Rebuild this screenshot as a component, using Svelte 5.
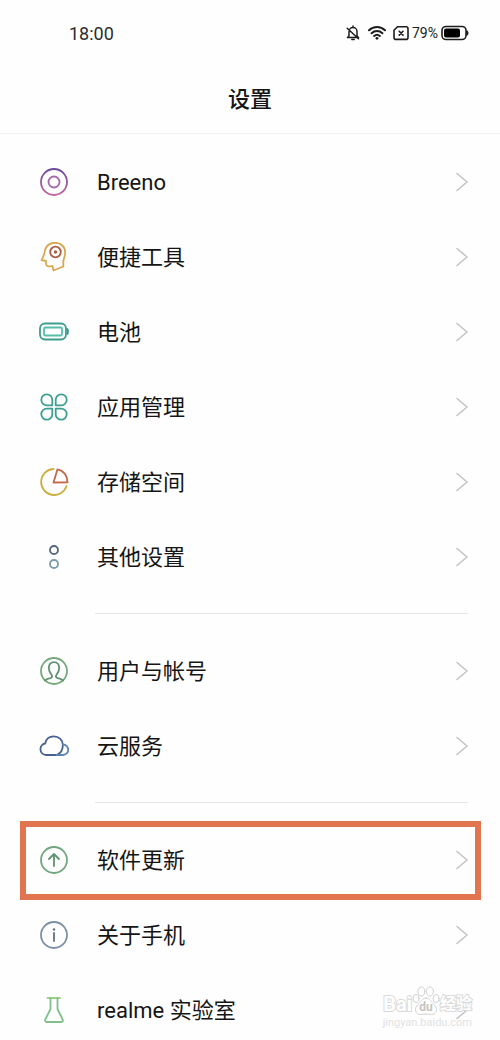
<script>
	const groups = [
		[
			{ id: "breeno", name: "Breeno" },
			{ id: "tools", name: "便捷工具" },
			{ id: "battery", name: "电池" },
			{ id: "apps", name: "应用管理" },
			{ id: "storage", name: "存储空间" },
			{ id: "other", name: "其他设置" },
		],
		[
			{ id: "account", name: "用户与帐号" },
			{ id: "cloud", name: "云服务" },
		],
		[
			{ id: "update", name: "软件更新" },
			{ id: "about", name: "关于手机" },
			{ id: "lab", name: "realme 实验室" },
		],
	];

	let marked = "update";
</script>

<main>
	<div class="status">
		<span class="time">18:00</span>
		<div class="indicators">
			<svg class="bell" width="14" height="16" viewBox="0 0 14 16">
				<path d="M3 11V6.5a4 4 0 0 1 8 0V11l1.5 1.5h-11L3 11M7 1v1.5M5.8 14.4h2.4M1.2 3.2l11.3 10.6" />
			</svg>
			<svg class="wifi" width="18" height="16" viewBox="0 0 18 16">
				<path d="M1 5.2a11.5 11.5 0 0 1 16 0M3.6 8.2a7.8 7.8 0 0 1 10.8 0M6.2 11a4.2 4.2 0 0 1 5.6 0" />
				<circle cx="9" cy="13.3" r="1.4" />
			</svg>
			<svg class="sim" width="16" height="16" viewBox="0 0 16 16">
				<path d="M4.5 1.8H13a2 2 0 0 1 2 2v8.6a2 2 0 0 1-2 2H3a2 2 0 0 1-2-2V5.3zM6.2 6.3l3.8 3.8M10 6.3l-3.8 3.8" />
			</svg>
			<span class="percent">79%</span>
			<svg class="power" width="28" height="16" viewBox="0 0 28 16">
				<rect x="1" y="1.5" width="24" height="13" rx="4" />
				<rect class="level" x="3" y="3.5" width="16" height="9" rx="2" />
				<path d="M26 6.2q1.4 1.8 0 3.6z" />
			</svg>
		</div>
	</div>

	<header>
		<h1>设置</h1>
	</header>

	<nav>
		{#each groups as group}
			<ul>
				{#each group as item}
					<li class:marked={item.id === marked}>
						<a href="#{item.id}">
							<svg class="icon" width="30" height="30" viewBox="0 0 30 30">
								{#if item.id === "breeno"}
									<defs>
										<linearGradient id="ring" x1="0" y1="0" x2="0" y2="1">
											<stop offset="0" stop-color="#6a4a9c" />
											<stop offset="1" stop-color="#c0669c" />
										</linearGradient>
									</defs>
									<circle cx="15" cy="15" r="13" stroke="url(#ring)" />
									<circle cx="15" cy="15" r="5.5" stroke="#a668ac" />
								{:else if item.id === "tools"}
									<path
										stroke="#d8a850"
										d="M6 8C7.500 3.500 11 .8 16 .8c6 0 10.200 4 10.200 9.700 0 4-1.700 6-1.900 9.500v4.500L14.500 28.500l-1-4.500c-3 .9-6.300.5-6.500-1.800V19L2.500 18c2-3 3-6 3.500-10z"
									/>
									<circle cx="16.500" cy="10" r="5.300" stroke="#a95f45" />
									<circle cx="16.500" cy="10" r="1.700" fill="#a95f45" stroke="none" />
								{:else if item.id === "battery"}
									<rect x="1" y="6.500" width="26" height="16" rx="5" stroke="#3c9d8c" />
									<rect x="5" y="10.500" width="18" height="8" rx="1.500" stroke="#55bda9" />
									<path d="M28.500 12q1 2.500 0 5z" stroke="#3c9d8c" />
								{:else if item.id === "apps"}
									<path
										stroke="#3d9f91"
										d="M13.300 13.300H8a5.500 5.500 0 1 1 5.300-5.500zM16.700 13.300V7.800a5.500 5.500 0 1 1 5.300 5.500zM13.300 16.700v5.500A5.500 5.500 0 1 1 8 16.700zM16.700 16.700H22a5.500 5.500 0 1 1-5.300 5.500z"
									/>
								{:else if item.id === "storage"}
									<path stroke="#cbb044" d="M14.500 2A13 13 0 1 0 27.500 19" />
									<path stroke="#c2694c" d="M18.500 2.300 14.500 15.500l14-.2C28.500 9 25 3.500 18.500 2.300z" />
								{:else if item.id === "other"}
									<circle cx="15" cy="8" r="4" stroke="#53667f" />
									<circle cx="15" cy="22" r="4" stroke="#7b9aaa" />
								{:else if item.id === "account"}
									<circle cx="15" cy="15" r="13" stroke="#76a97b" />
									<path
										stroke="#5f9270"
										d="M6 24.500c1.500-1.500 3.500-2 5.300-2.300 2-.4 2.300-2 1.200-3.500C10.800 16.500 9.800 14.300 9.800 11.700c0-3.400 2.200-5.600 5.200-5.600s5.200 2.200 5.200 5.600c0 2.600-1 4.800-2.700 7-1.100 1.500-.8 3.100 1.200 3.500 1.800.3 3.800.8 5.300 2.300"
									/>
								{:else if item.id === "cloud"}
									<path
										stroke="#45618f"
										d="M7 24a5.800 5.800 0 0 1-.8-11.500C7 8 10.500 5.300 14.800 5.300c5 0 8.700 3.500 9 8.400.2 4.600-1.600 8.300-6.300 10.300z"
									/>
									<path stroke="#5d82b5" d="M17.500 24H24a5 5 0 0 0 0-10.500" />
								{:else if item.id === "update"}
									<circle cx="15" cy="15" r="13" stroke="#71a67e" />
									<path stroke="#5e9270" d="M15 21V9M10 14l5-5 5 5" />
								{:else if item.id === "about"}
									<circle cx="15" cy="15" r="13" stroke="#7d8fa5" />
									<path stroke="#5d7088" d="M15 12.800V21" />
									<circle cx="15" cy="9.500" r="1.200" fill="#5d7088" stroke="none" />
								{:else if item.id === "lab"}
									<path stroke="#9bd383" d="M8.500 3h12.500" />
									<path
										stroke="#7fc08c"
										d="M11.500 3v11L6.300 24.500c-.7 1.600.1 2.500 1.500 2.500h14.400c1.400 0 2.200-.9 1.500-2.500L18.500 14V3"
									/>
								{/if}
							</svg>
							<span class="name">{item.name}</span>
							<svg class="arrow" width="12" height="20" viewBox="0 0 12 20">
								<path d="M1 1.500 11 10 1 18.500" />
							</svg>
						</a>
					</li>
				{/each}
			</ul>
		{/each}
	</nav>

	<div class="watermark">
		<div class="brand">
			<span>Bai</span>
			<span class="paw">
				<svg width="28" height="30" viewBox="0 0 28 30">
					<ellipse cx="4" cy="12.500" rx="3" ry="4" />
					<ellipse cx="9.500" cy="5.500" rx="3.500" ry="4.500" />
					<ellipse cx="18" cy="5.500" rx="3.500" ry="4.500" />
					<ellipse cx="24" cy="12.500" rx="3" ry="4" />
					<path d="M14 12c-4 0-5 4-8 6.500-4.500 4-2.500 10 2.500 10 2 0 3.500-.5 5.500-.5s3.500.5 5.500.5c5 0 7-6 2.500-10C19 16 18 12 14 12z" />
				</svg>
				<small>du</small>
			</span>
			<span class="cn">经验</span>
		</div>
		<div class="site">jingyan.baidu.com</div>
	</div>
</main>

<style>
	:global(body) {
		background-color: #fefefe;
	}

	main {
		position: relative;
		height: 100vh;
		display: flex;
		flex-direction: column;
		overflow: hidden;
		color: #151515;
		font-family: Roboto, "Noto Sans CJK SC", sans-serif;
	}

	svg {
		display: block;
		flex: none;
		fill: none;
		stroke-linecap: round;
		stroke-linejoin: round;
	}

	.status {
		flex: none;
		display: flex;
		align-items: center;
		justify-content: space-between;
		height: 66px;
		padding: 0 31px 0 69px;
	}
	.time {
		font-size: 18px;
		color: #2d2d2d;
	}
	.indicators {
		display: flex;
		align-items: center;
		stroke: #1c1c1c;
	}
	.bell {
		margin-right: 8px;
		stroke-width: 1.5;
	}
	.wifi {
		margin-right: 7px;
		stroke-width: 2;
	}
	.wifi circle {
		fill: #1c1c1c;
		stroke: none;
	}
	.sim {
		margin-right: 3px;
		stroke-width: 1.6;
	}
	.percent {
		font-size: 14px;
		margin-right: 3px;
		color: #222;
	}
	.power {
		stroke-width: 1.6;
	}
	.power .level {
		fill: #000;
		stroke: none;
	}

	header {
		flex: none;
		padding: 19px 0 18px;
		border-bottom: 1px solid #f3f3f3;
		text-align: center;
	}
	h1 {
		margin: 0;
		font-size: 22px;
		font-weight: 500;
		line-height: 30px;
	}

	nav {
		flex: 1;
		padding-top: 10px;
		overflow-y: auto;
		scrollbar-width: none;
	}
	ul {
		list-style: none;
		margin: 0;
		padding: 0;
	}
	ul + ul::before {
		content: "";
		display: block;
		height: 1px;
		margin: 19px 32px 19px 95px;
		background-color: #e6e6e6;
	}
	li {
		position: relative;
	}
	.marked::after {
		content: "";
		position: absolute;
		inset: -1px 19px -3px 20px;
		border: 6px solid #e07550;
		pointer-events: none;
	}
	a {
		display: flex;
		align-items: center;
		height: 75px;
		padding: 0 32px 0 39px;
		color: inherit;
		text-decoration: none;
	}
	.icon {
		stroke-width: 1.8;
	}
	.name {
		flex: 1;
		margin-left: 28px;
		padding-top: 3px;
		font-size: 22px;
		line-height: 30px;
	}
	.arrow {
		stroke: #c4c4c4;
		stroke-width: 1.6;
	}

	.watermark {
		position: absolute;
		right: 28px;
		bottom: 10px;
		color: #fff;
		pointer-events: none;
	}
	.brand {
		display: flex;
		align-items: flex-end;
		justify-content: flex-end;
		font-size: 20px;
		font-weight: 700;
		line-height: 24px;
		-webkit-text-stroke: 2px #dadada;
		paint-order: stroke fill;
	}
	.cn {
		font-size: 16px;
	}
	.paw {
		position: relative;
	}
	.paw svg {
		fill: #fff;
		stroke: #d2d2d2;
		stroke-width: 1;
		paint-order: normal;
	}
	.paw small {
		position: absolute;
		left: 0;
		right: 0;
		bottom: 0;
		font-size: 12px;
		line-height: 18px;
		text-align: center;
		color: #c4c4c4;
		-webkit-text-stroke: 0;
	}
	.site {
		font-size: 11px;
		line-height: 14px;
		text-align: right;
		color: #e2e2e2;
	}
</style>
